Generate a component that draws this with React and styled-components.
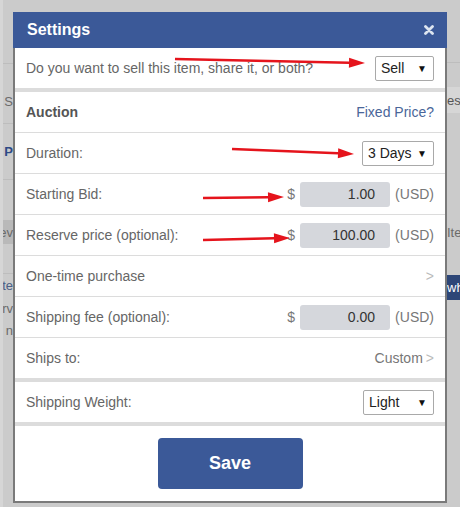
import React from "react";
import styled, { createGlobalStyle } from "styled-components";

const GlobalStyle = createGlobalStyle`
  html, body {
    margin: 0;
    padding: 0;
    background: #cbcbcb;
    font-family: "Liberation Sans", Arial, sans-serif;
  }
`;

const Page = styled.div`
  position: relative;
  width: 460px;
  height: 507px;
  display: flex;
  background: #cbcbcb;
  overflow: hidden;
`;

const Strip = styled.div`
  width: 13px;
  flex-shrink: 0;
  display: flex;
  flex-direction: column;
  overflow: hidden;
  ${({ $side }) =>
    $side === "left"
      ? `border-left: 3px solid #d6d6d6; width: 10px;`
      : ``}
`;

const StripCell = styled.div`
  height: ${({ $h }) => $h}px;
  flex-shrink: 0;
  display: flex;
  align-items: center;
  justify-content: ${({ $align }) => ($align === "right" ? "flex-end" : "flex-start")};
  white-space: nowrap;
  font-size: 13px;
  color: ${({ $color }) => $color || "#6a6a6a"};
  font-weight: ${({ $bold }) => ($bold ? 700 : 400)};
  background: ${({ $bg }) => $bg || "transparent"};
  border-bottom: ${({ $line }) => ($line ? "1px solid #bdbdbd" : "none")};
  box-sizing: border-box;
`;

const Modal = styled.div`
  width: 434px;
  flex-shrink: 0;
  margin-top: 12px;
  height: 491px;
  display: flex;
  flex-direction: column;
  background: #fff;
`;

const Header = styled.div`
  height: 36px;
  flex-shrink: 0;
  background: #3b5998;
  display: flex;
  align-items: center;
  justify-content: space-between;
  padding: 0 13px 0 14px;
`;

const Title = styled.div`
  color: #fff;
  font-size: 16px;
  font-weight: 700;
`;

const Close = styled.svg`
  width: 10px;
  height: 10px;
  display: block;
`;

const Body = styled.div`
  flex: 1;
  display: flex;
  flex-direction: column;
  border: 2px solid #7a7a7a;
  border-top: none;
`;

const Row = styled.div`
  height: 40px;
  flex-shrink: 0;
  display: flex;
  align-items: center;
  justify-content: space-between;
  padding: 0 11px;
  border-bottom: ${({ $last }) => ($last ? "none" : "1px solid #dcdcdc")};
`;

const Label = styled.span`
  font-size: 14px;
  color: #666;
  font-weight: ${({ $bold }) => ($bold ? 700 : 400)};
  ${({ $bold }) => $bold && "color: #555;"}
`;

const Separator = styled.div`
  height: 4px;
  flex-shrink: 0;
  background: #dcdcdc;
`;

const Select = styled.div`
  width: ${({ $w }) => $w}px;
  height: 25px;
  box-sizing: border-box;
  border: 1px solid #a9a9a9;
  border-radius: 2px;
  display: flex;
  align-items: center;
  justify-content: space-between;
  padding: 0 6px 0 5px;
  font-size: 14px;
  color: #222;
`;

const Caret = styled.span`
  font-size: 10px;
  color: #111;
`;

const LinkText = styled.span`
  font-size: 14px;
  color: #4a6699;
`;

const Money = styled.div`
  display: flex;
  align-items: center;
  gap: 5px;
  font-size: 14px;
  color: #777;
`;

const Amount = styled.div`
  width: 90px;
  height: 25px;
  box-sizing: border-box;
  background: #d5d7dc;
  border-radius: 3px;
  padding-right: 15px;
  display: flex;
  align-items: center;
  justify-content: flex-end;
  font-size: 14px;
  color: #333;
`;

const Trail = styled.span`
  font-size: 14px;
  color: #777;
  display: flex;
  align-items: center;
  gap: 3px;
`;

const Chevron = styled.span`
  color: #bbb;
  font-size: 14px;
`;

const Footer = styled.div`
  flex: 1;
  display: flex;
  justify-content: center;
  align-items: flex-start;
  padding-top: 12px;
`;

const SaveButton = styled.button`
  width: 145px;
  height: 51px;
  border: none;
  border-radius: 4px;
  background: #3b5998;
  color: #fff;
  font-family: "Liberation Sans", Arial, sans-serif;
  font-size: 18px;
  font-weight: 700;
  cursor: pointer;
`;

const Annotations = styled.svg`
  position: absolute;
  left: 0;
  top: 0;
  width: 460px;
  height: 507px;
  pointer-events: none;
`;

const leftCells = [
  { h: 64, line: true },
  { h: 24 },
  { h: 26, text: "S" },
  { h: 10, line: true },
  { h: 56, text: "P", color: "#2d4a86", bold: true, line: true },
  { h: 40 },
  { h: 24, text: "ev", bg: "#b9b9b9" },
  { h: 30, line: true },
  { h: 22, text: "te", color: "#4a5f86" },
  { h: 24, text: "erv" },
  { h: 20, text: "r n" },
  { h: 167 },
];

const rightCells = [
  { h: 63, line: true },
  { h: 24 },
  { h: 26, text: "es", bg: "#d6d6d6", color: "#555" },
  { h: 107 },
  { h: 24, text: "Ite" },
  { h: 31 },
  { h: 25, text: "who", bg: "#2d4677", color: "#fff" },
  { h: 207 },
];

const arrows = [
  [175, 59, 365, 63],
  [232, 149, 354, 154],
  [203, 198, 284, 197],
  [203, 240, 290, 238],
];

const Arrow = ({ x1, y1, x2, y2 }) => {
  const a = Math.atan2(y2 - y1, x2 - x1);
  const len = 16;
  const hw = 5;
  const bx = x2 - len * Math.cos(a);
  const by = y2 - len * Math.sin(a);
  const px = -Math.sin(a) * hw;
  const py = Math.cos(a) * hw;
  return (
    <g>
      <line x1={x1} y1={y1} x2={bx} y2={by} stroke="#e5141c" strokeWidth="2.5" />
      <polygon
        points={`${x2},${y2} ${bx + px},${by + py} ${bx - px},${by - py}`}
        fill="#e5141c"
      />
    </g>
  );
};

const SelectBox = ({ value, width }) => (
  <Select $w={width}>
    {value}
    <Caret>▼</Caret>
  </Select>
);

const MoneyField = ({ value }) => (
  <Money>
    $<Amount>{value}</Amount>(USD)
  </Money>
);

export default function App() {
  return (
    <>
      <GlobalStyle />
      <Page>
        <Strip $side="left">
          {leftCells.map((c, i) => (
            <StripCell key={i} $h={c.h} $align="right" $line={c.line} $bg={c.bg} $color={c.color} $bold={c.bold}>
              {c.text}
            </StripCell>
          ))}
        </Strip>
        <Modal>
          <Header>
            <Title>Settings</Title>
            <Close viewBox="0 0 10 10">
              <path d="M1.5 1.5 L8.5 8.5 M8.5 1.5 L1.5 8.5" stroke="#dde5f0" strokeWidth="2.8" strokeLinecap="round" />
            </Close>
          </Header>
          <Body>
            <Row $last>
              <Label>Do you want to sell this item, share it, or both?</Label>
              <SelectBox value="Sell" width={59} />
            </Row>
            <Separator />
            <Row>
              <Label $bold>Auction</Label>
              <LinkText>Fixed Price?</LinkText>
            </Row>
            <Row>
              <Label>Duration:</Label>
              <SelectBox value="3 Days" width={72} />
            </Row>
            <Row>
              <Label>Starting Bid:</Label>
              <MoneyField value="1.00" />
            </Row>
            <Row>
              <Label>Reserve price (optional):</Label>
              <MoneyField value="100.00" />
            </Row>
            <Row>
              <Label>One-time purchase</Label>
              <Chevron>&gt;</Chevron>
            </Row>
            <Row>
              <Label>Shipping fee (optional):</Label>
              <MoneyField value="0.00" />
            </Row>
            <Row $last>
              <Label>Ships to:</Label>
              <Trail>
                Custom<Chevron>&gt;</Chevron>
              </Trail>
            </Row>
            <Separator />
            <Row $last>
              <Label>Shipping Weight:</Label>
              <SelectBox value="Light" width={71} />
            </Row>
            <Separator />
            <Footer>
              <SaveButton>Save</SaveButton>
            </Footer>
          </Body>
        </Modal>
        <Strip $side="right">
          {rightCells.map((c, i) => (
            <StripCell key={i} $h={c.h} $line={c.line} $bg={c.bg} $color={c.color}>
              {c.text}
            </StripCell>
          ))}
        </Strip>
        <Annotations viewBox="0 0 460 507">
          {arrows.map(([x1, y1, x2, y2], i) => (
            <Arrow key={i} x1={x1} y1={y1} x2={x2} y2={y2} />
          ))}
        </Annotations>
      </Page>
    </>
  );
}
